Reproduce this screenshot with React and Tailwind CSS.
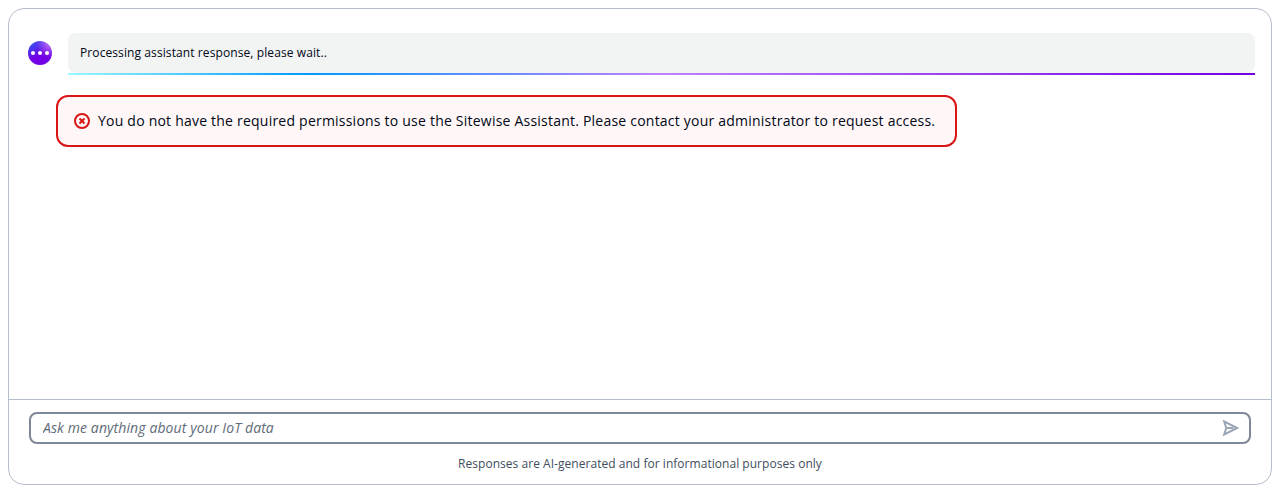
export default function App() {
  return (
    <div className="h-[493px] p-2 bg-white font-['Open_Sans','Noto_Sans',sans-serif] text-[#000716]">
      <main className="flex h-[477px] flex-col rounded-2xl border border-[#b6bec9]">
        <section className="flex-1 pt-6 pr-4">
          <div className="flex gap-4 pl-[19px]">
            <div className="mt-2 flex size-6 shrink-0 items-center justify-center gap-[3px] rounded-full bg-[radial-gradient(circle_farthest-corner_at_top_left,rgba(0,150,250,1)_-25%,rgba(0,150,250,0)_55%),radial-gradient(circle_farthest-corner_at_top_right,rgba(216,178,255,1)_-10%,rgba(115,0,229,1)_50%)]">
              <span className="size-1 rounded-full bg-white" />
              <span className="size-1 rounded-full bg-white" />
              <span className="size-1 rounded-full bg-white" />
            </div>
            <div className="flex-1">
              <div className="h-10 rounded-lg bg-[#f2f3f3] px-3 py-2.5 text-xs leading-5 tracking-[0.095px]">
                Processing assistant response, please wait..
              </div>
              <div className="h-0.5 bg-[linear-gradient(90deg,#99f7ff_0%,#0099ff_20%,#bf80ff_50%,#7300e5_100%)]" />
            </div>
          </div>
          <div className="mt-5 ml-[47px] flex h-[52px] w-[901px] items-center gap-2 rounded-xl border-2 border-[#d91515] bg-[#fff7f7] px-4">
            <svg className="size-4 shrink-0" viewBox="0 0 16 16" fill="none" stroke="#d91515" strokeWidth="2">
              <circle cx="8" cy="8" r="7" />
              <path d="m5.500 5.500 5 5M10.500 5.500l-5 5" />
            </svg>
            <p className="text-sm leading-5 tracking-[0.22px] whitespace-nowrap">
              You do not have the required permissions to use the Sitewise Assistant. Please contact your administrator to request access.
            </p>
          </div>
        </section>
        <footer className="h-[85px] border-t border-[#b6bec9] px-5 pt-3">
          <div className="flex h-8 items-center rounded-lg border-2 border-[#7d8998] pr-2.5 pl-3">
            <input
              className="min-w-0 flex-1 text-sm leading-5 tracking-[0.1px] outline-none placeholder:text-[#5f6b7a] placeholder:italic"
              placeholder="Ask me anything about your IoT data"
            />
            <svg className="size-4 shrink-0 overflow-visible" viewBox="0 0 16 16" fill="none" stroke="#9ba7b6" strokeWidth="2">
              <path d="M1.200 1.500l13 6.500-13 6.500 2-6.500-2-6.500ZM3.200 8h7" />
            </svg>
          </div>
          <p className="mt-2.5 text-center text-xs leading-5 tracking-[0.036px] text-[#414d5c]">
            Responses are AI-generated and for informational purposes only
          </p>
        </footer>
      </main>
    </div>
  );
}
